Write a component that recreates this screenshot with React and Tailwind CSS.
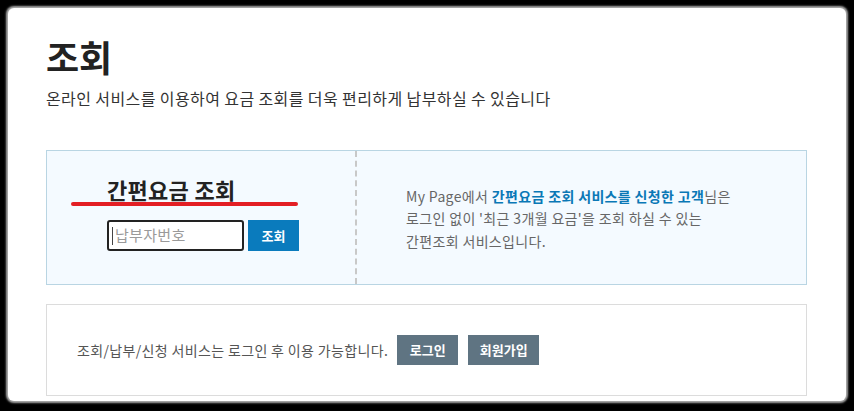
import React from 'react'

const font = { fontFamily: '"Noto Sans CJK KR", "Noto Sans", sans-serif' }

export default function App() {
  return (
    <div className="w-[854px] h-[411px] bg-black overflow-hidden pt-[8px] pl-[8px]" style={font}>
      <div className="w-[838px] h-[393px] bg-white rounded-[6px] shadow-[0_0_2px_2px_rgba(190,190,190,0.9)] pl-[38px] pt-[26px]">
        <h1 className="text-[36px] leading-[44px] font-bold text-[#222]">조회</h1>
        <p className="mt-[8px] text-[16px] leading-[24px] text-[#333] tracking-[0.4px]">
          온라인 서비스를 이용하여 요금 조회를 더욱 편리하게 납부하실 수 있습니다
        </p>

        <div className="mt-[40px] w-[761px] h-[135px] flex border border-[#b9d5e3] bg-[#f4faff]">
          <div className="w-[310px] border-r-2 border-dashed border-[#c8c8c8] flex flex-col pt-[24px]">
            <h2 className="ml-[60px] text-[22px] leading-[28px] font-bold text-[#222] tracking-[0.3px]">간편요금 조회</h2>
            <div className="ml-[24px] mt-[-1px] w-[227px] h-[4px] rounded-full bg-[#e31e24]" />
            <div className="ml-[60px] mt-[14px] flex gap-[4px]">
              <div className="w-[137px] h-[31px] border-2 border-[#222] rounded-[3px] bg-white flex items-center pl-[3px]">
                <span className="w-px h-[18px] bg-[#444] mr-[2px]" />
                <span className="text-[15px] text-[#9a9a9a] tracking-[0.3px]">납부자번호</span>
              </div>
              <button className="w-[51px] h-[31px] bg-[#0a7bbd] text-white text-[13px] font-bold">조회</button>
            </div>
          </div>
          <div className="flex-1 flex items-center pl-[49px] pt-[2px]">
            <p className="text-[14px] leading-[22.5px] text-[#666] tracking-[0.35px]">
              My Page에서 <b className="text-[#0a78b6]">간편요금 조회 서비스를 신청한 고객</b>님은
              <br />
              로그인 없이 '최근 3개월 요금'을 조회 하실 수 있는
              <br />
              간편조회 서비스입니다.
            </p>
          </div>
        </div>

        <div className="mt-[19px] w-[761px] h-[92px] border border-[#dcdcdc] flex items-center pl-[30px]">
          <span className="text-[14px] text-[#555] tracking-[0.35px]">조회/납부/신청 서비스는 로그인 후 이용 가능합니다.</span>
          <button className="ml-[9px] w-[61px] h-[30px] bg-[#5f7482] text-white text-[13px] font-semibold">로그인</button>
          <button className="ml-[10px] w-[71px] h-[30px] bg-[#5f7482] text-white text-[13px] font-semibold">회원가입</button>
        </div>
      </div>
    </div>
  )
}
